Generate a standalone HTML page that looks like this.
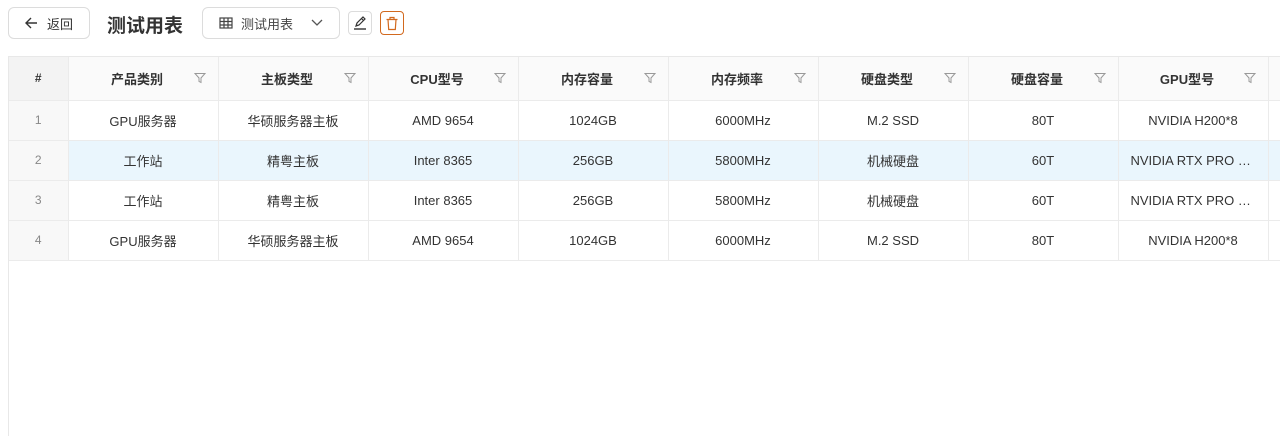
<!DOCTYPE html>
<html><head><meta charset="utf-8"><style>
*{box-sizing:border-box;margin:0;padding:0}
body{width:1280px;height:419px;overflow:hidden;background:#fff;font-family:"Liberation Sans","Noto Sans CJK SC",sans-serif;color:#333;position:relative}
.btn{position:absolute;border:1px solid #dcdcdc;border-radius:6px;background:#fff;display:flex;align-items:center}
.title{position:absolute;left:107px;top:11px;font-size:19px;font-weight:bold;color:#333}
.wrap{position:absolute;left:8px;top:56px;width:1290px;height:380px;border-left:1px solid #e8e8e8;border-top:1px solid #e8e8e8;overflow:hidden}
table{border-collapse:collapse;table-layout:fixed;font-size:13px;width:1409px}
td,th{border-right:1px solid #ebebeb;border-bottom:1px solid #ebebeb;text-align:center;white-space:nowrap;overflow:hidden;text-overflow:ellipsis;padding:0 12px;color:#333}
th{height:43px;background:#fafafa;font-weight:bold;position:relative;padding-right:24px}
td{height:40px}
td.n{background:#f8f8f8;color:#888;font-size:12px;padding:0}
th.n{background:#f3f3f3;font-size:12px;padding:0}
tr.hl td:not(.n){background:#eaf6fd}
.f{position:absolute;right:12px;top:15px}
</style></head><body>
<div class="btn" style="left:8px;top:7px;width:82px;height:32px;padding-left:15px;font-size:13px;color:#333">
<svg width="14" height="14" viewBox="0 0 14 14" fill="none" stroke="#333" stroke-width="1.4"><path d="M13 7H2M7 2L2 7l5 5"/></svg><span style="margin-left:9px">返回</span></div>
<div class="title">测试用表</div>
<div class="btn" style="left:202px;top:7px;width:138px;height:32px;padding-left:16px;font-size:13px;color:#444">
<svg width="14" height="12" viewBox="0 0 14 12" fill="none" stroke="#444" stroke-width="1.2"><rect x="1" y="1" width="12" height="10"/><path d="M1 4.5h12M1 8h12M5 1v10M9 1v10"/></svg>
<span style="margin-left:8px">测试用表</span>
<svg style="position:absolute;right:16px;top:11px" width="12" height="8" viewBox="0 0 12 8" fill="none" stroke="#555" stroke-width="1.3"><path d="M1 1l5 5 5-5"/></svg></div>
<div class="btn" style="left:348px;top:11px;width:24px;height:24px;border-radius:4px;justify-content:center">
<svg width="14" height="14" viewBox="0 0 14 14" fill="none" stroke="#333" stroke-width="1.2"><path d="M3 10l1-3 6-6 2 2-6 6zM8.5 2.5l2 2"/><path d="M1 13h12" stroke-width="1.4"/></svg></div>
<div class="btn" style="left:380px;top:11px;width:24px;height:24px;border-radius:4px;border-color:#d2691e;justify-content:center">
<svg width="14" height="15" viewBox="0 0 14 15" fill="none" stroke="#d2691e" stroke-width="1.2"><path d="M1.5 3.5h11M5 3.5V1.5h4v2M3 3.5l.7 10h6.6l.7-10"/></svg></div>
<div class="wrap"><table>
<colgroup><col style="width:59px"><col style="width:150px"><col style="width:150px"><col style="width:150px"><col style="width:150px"><col style="width:150px"><col style="width:150px"><col style="width:150px"><col style="width:150px"><col style="width:150px"></colgroup>
<tr><th class="n">#</th>
<th>产品类别<svg class="f" width="12" height="12" viewBox="0 0 12 12" fill="none" stroke="#999"><path d="M1 1.5h10L7 6v4.5L5 9.5V6z"/></svg></th>
<th>主板类型<svg class="f" width="12" height="12" viewBox="0 0 12 12" fill="none" stroke="#999"><path d="M1 1.5h10L7 6v4.5L5 9.5V6z"/></svg></th>
<th>CPU型号<svg class="f" width="12" height="12" viewBox="0 0 12 12" fill="none" stroke="#999"><path d="M1 1.5h10L7 6v4.5L5 9.5V6z"/></svg></th>
<th>内存容量<svg class="f" width="12" height="12" viewBox="0 0 12 12" fill="none" stroke="#999"><path d="M1 1.5h10L7 6v4.5L5 9.5V6z"/></svg></th>
<th>内存频率<svg class="f" width="12" height="12" viewBox="0 0 12 12" fill="none" stroke="#999"><path d="M1 1.5h10L7 6v4.5L5 9.5V6z"/></svg></th>
<th>硬盘类型<svg class="f" width="12" height="12" viewBox="0 0 12 12" fill="none" stroke="#999"><path d="M1 1.5h10L7 6v4.5L5 9.5V6z"/></svg></th>
<th>硬盘容量<svg class="f" width="12" height="12" viewBox="0 0 12 12" fill="none" stroke="#999"><path d="M1 1.5h10L7 6v4.5L5 9.5V6z"/></svg></th>
<th>GPU型号<svg class="f" width="12" height="12" viewBox="0 0 12 12" fill="none" stroke="#999"><path d="M1 1.5h10L7 6v4.5L5 9.5V6z"/></svg></th>
<th></th></tr>
<tr><td class="n">1</td><td>GPU服务器</td><td>华硕服务器主板</td><td>AMD 9654</td><td>1024GB</td><td>6000MHz</td><td>M.2 SSD</td><td>80T</td><td>NVIDIA H200*8</td><td></td></tr>
<tr class="hl"><td class="n">2</td><td>工作站</td><td>精粤主板</td><td>Inter 8365</td><td>256GB</td><td>5800MHz</td><td>机械硬盘</td><td>60T</td><td>NVIDIA RTX PRO 6000</td><td></td></tr>
<tr><td class="n">3</td><td>工作站</td><td>精粤主板</td><td>Inter 8365</td><td>256GB</td><td>5800MHz</td><td>机械硬盘</td><td>60T</td><td>NVIDIA RTX PRO 6000</td><td></td></tr>
<tr><td class="n">4</td><td>GPU服务器</td><td>华硕服务器主板</td><td>AMD 9654</td><td>1024GB</td><td>6000MHz</td><td>M.2 SSD</td><td>80T</td><td>NVIDIA H200*8</td><td></td></tr>
</table></div>
</body></html>
